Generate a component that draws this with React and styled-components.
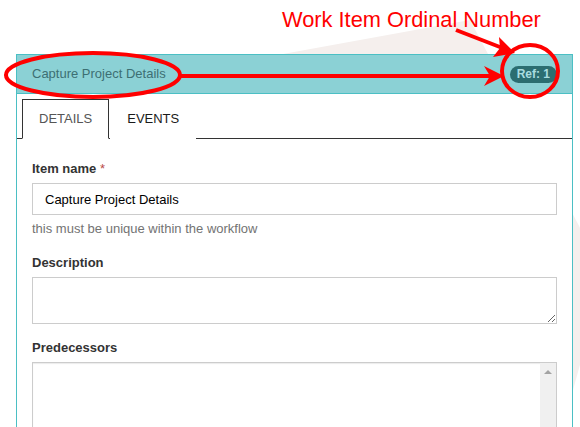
import React from "react"
import styled, { createGlobalStyle } from "styled-components"

const GlobalStyle = createGlobalStyle`
    html, body {
        margin: 0;
        padding: 0;
        background: #fff;
        overflow: hidden;
    }
    body {
        font-family: "Liberation Sans", Arial, sans-serif;
        font-size: 13px;
        line-height: 18px;
        color: #333;
    }
`

const Page = styled.div`
    position: relative;
    width: 580px;
    height: 427px;
    overflow: hidden;
    padding: 54px 0 0 16px;
    box-sizing: border-box;
`

const Backdrop = styled.svg`
    position: absolute;
    top: 0;
    left: 0;
    z-index: 0;
`

const Overlay = styled.svg`
    position: absolute;
    top: 0;
    left: 0;
    z-index: 2;
    pointer-events: none;
`

const Callout = styled.div`
    position: absolute;
    top: 7px;
    left: 282px;
    z-index: 3;
    font-size: 21.8px;
    line-height: 26px;
    color: #f00;
    white-space: nowrap;
`

const Panel = styled.div`
    position: relative;
    z-index: 1;
    width: 557px;
    height: 420px;
    box-sizing: border-box;
    border: 1px solid #4bbfc4;
    background: #fff;
`

const Heading = styled.div`
    display: flex;
    align-items: center;
    justify-content: space-between;
    height: 38px;
    padding: 0 15px;
    background: #8bd1d5;
    border-bottom: 1px solid #4bbfc4;
    color: #3d6f73;
`

const Badge = styled.span`
    display: inline-block;
    height: 17px;
    line-height: 17px;
    padding: 0 7px;
    border-radius: 9px;
    background: #2b6e71;
    color: #a9dde0;
    font-size: 12px;
    font-weight: bold;
`

const TabBar = styled.div`
    display: flex;
    align-items: flex-end;
    margin-top: 5px;
    padding-left: 5px;
    border-bottom: 1px solid #333;
`

const Tab = styled.div`
    padding: 10px 16px;
    margin-right: 1px;
    margin-bottom: -1px;
    border: 1px solid ${p => (p.$active ? "#333" : "transparent")};
    border-bottom-color: ${p => (p.$active ? "#fff" : "transparent")};
    background: #fff;
    color: ${p => (p.$active ? "#555" : "#1a1a1a")};
`

const Body = styled.div`
    padding: 21px 15px 0;
`

const Group = styled.div`
    margin-bottom: ${p => p.$gap || 15}px;
`

const Label = styled.div`
    font-weight: bold;
    margin-bottom: 5px;
    color: #333;
`

const Req = styled.span`
    color: #b94a48;
    font-weight: normal;
`

const Input = styled.input`
    display: block;
    width: 100%;
    height: 32px;
    box-sizing: border-box;
    padding: 0 12px;
    border: 1px solid #ccc;
    font-family: inherit;
    font-size: 13px;
    color: #000;
    outline: none;
`

const Help = styled.div`
    margin-top: 5px;
    color: #737373;
`

const TextArea = styled.textarea`
    display: block;
    width: 100%;
    height: 47px;
    box-sizing: border-box;
    border: 1px solid #ccc;
    font-family: inherit;
    font-size: 13px;
    outline: none;
`

const ListBox = styled.div`
    display: flex;
    justify-content: flex-end;
    height: 72px;
    border: 1px solid #ccc;
    box-shadow: inset 0 1px 1px rgba(0, 0, 0, 0.08);
`

const ScrollTrack = styled.div`
    display: flex;
    flex-direction: column;
    justify-content: space-between;
    align-items: center;
    width: 16px;
    padding: 7px 0 3px;
    background: #f0f0f0;
`

const Arrow = styled.span`
    width: 0;
    height: 0;
    border-left: 4px solid transparent;
    border-right: 4px solid transparent;
    ${p => (p.$down ? "border-top: 4px solid #a3a3a3;" : "border-bottom: 4px solid #a3a3a3;")}
`

export default function App() {
    return (
        <>
            <GlobalStyle />
            <Page>
                <Backdrop width="580" height="427">
                    <polygon points="283,54 470,20 605,275 573,390 300,427" fill="#f5efed" />
                </Backdrop>

                <Panel>
                    <Heading>
                        <span>Capture Project Details</span>
                        <Badge>Ref: 1</Badge>
                    </Heading>
                    <TabBar>
                        <Tab $active>DETAILS</Tab>
                        <Tab>EVENTS</Tab>
                    </TabBar>
                    <Body>
                        <Group $gap={16}>
                            <Label>Item name <Req>*</Req></Label>
                            <Input defaultValue="Capture Project Details" />
                            <Help>this must be unique within the workflow</Help>
                        </Group>
                        <Group>
                            <Label>Description</Label>
                            <TextArea />
                        </Group>
                        <Group>
                            <Label>Predecessors</Label>
                            <ListBox>
                                <ScrollTrack>
                                    <Arrow />
                                    <Arrow $down />
                                </ScrollTrack>
                            </ListBox>
                        </Group>
                    </Body>
                </Panel>

                <Callout>Work Item Ordinal Number</Callout>

                <Overlay width="580" height="427">
                    <g stroke="#f00" strokeWidth="4" fill="none">
                        <ellipse cx="93" cy="75" rx="87" ry="22" />
                        <line x1="180" y1="76" x2="492" y2="76" />
                        <ellipse cx="530" cy="71" rx="28" ry="26" />
                        <line x1="456" y1="30" x2="505" y2="49" />
                    </g>
                    <g fill="#f00">
                        <polygon points="484,66 504,76 484,86 490,76" />
                        <polygon points="499,37 515,53 493,57 500,48" />
                    </g>
                </Overlay>
            </Page>
        </>
    )
}
